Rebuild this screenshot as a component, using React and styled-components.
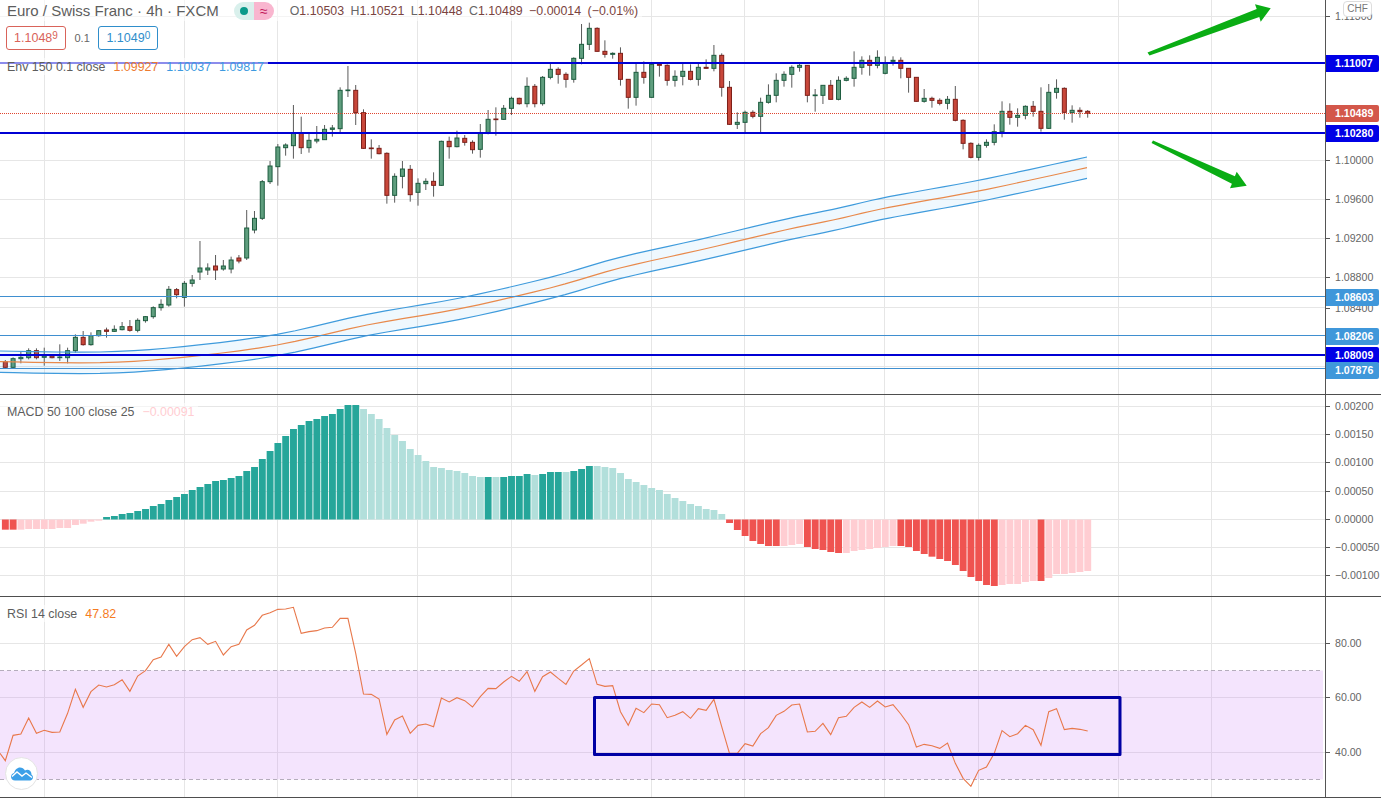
import React from 'react';
import styled, { createGlobalStyle } from 'styled-components';

const GlobalStyle = createGlobalStyle`
  html, body { margin: 0; padding: 0; background: #fff; }
  body { font-family: "Liberation Sans", Arial, sans-serif; overflow: hidden; }
`;

const PLOT_W = 1325;
const barX = (i) => 5.3 + i * 7.787;
const GRID_X = [44.5, 184.5, 277.5, 417.5, 511.5, 651.5, 744.5, 884.5, 978.5, 1118.5, 1211.5];

// candles: [bodyTop, bodyBottom, wickTop, wickBottom, colour], in thirds of a pixel
const CANDLES = `
1085 1102 1080 1105 r|1076 1102 1072 1105 g|1072 1076 1055 1090 g|1052 1073 1045 1078 g|1052 1073 1045 1078 r
1068 1072 1043 1097 g|1068 1073 1062 1075 r|1071 1073 1033 1083 g|1052 1073 1043 1090 g|1012 1052 1003 1058 g
1012 1034 993 1037 r|1007 1034 997 1037 g|992 1007 990 1010 g|990 994 983 1013 r|988 994 976 996 g
980 989 966 991 g|980 991 960 995 r|961 991 955 997 g|950 962 948 968 g|923 950 919 956 g
913 923 898 932 g|868 915 858 920 g|869 884 864 895 r|850 892 843 920 g|840 850 825 860 g
804 816 723 840 g|804 810 790 825 g|798 810 765 840 r|798 807 780 812 g|780 807 770 820 g
774 783 765 790 r|684 774 630 780 g|655 690 633 700 g|545 655 540 660 g|498 545 483 552 g
441 500 432 557 g|435 443 430 467 g|400 437 315 476 g|400 443 350 462 r|421 443 400 458 g
418 423 378 430 g|388 419 375 420 g|384 388 375 410 g|271 386 262 398 g|270 272 198 291 g
271 338 255 375 r|338 445 328 447 r|444 446 418 476 r|445 461 435 463 r|460 586 457 611 r
529 586 520 608 g|507 529 483 565 g|508 584 495 605 r|550 577 535 617 g|544 551 535 570 g
544 556 517 590 r|424 556 422 558 g|424 440 410 476 r|414 440 392 442 g
415 427 405 437 r|427 449 421 461 r|400 448 372 473 g|358 400 330 403 g|357 359 322 407 r
325 358 315 360 g|295 325 290 345 g|295 311 293 314 r|259 311 232 322 g|259 311 252 322 r
232 311 228 317 g|208 232 190 238 g|208 223 202 251 r|223 238 217 263 r|175 238 172 248 g
133 175 72 193 g|85 133 68 150 g|85 154 82 155 r|154 163 121 173 r|160 163 157 176 g
160 238 142 257 r|238 292 238 326 r|217 292 190 317 g|217 232 184 251 r|193 292 187 293 g
193 196 190 230 r|196 241 193 257 r|229 241 211 260 g|214 229 190 256 g|214 238 193 241 r
202 238 190 257 g|202 205 178 206 r|166 205 135 214 g|166 262 160 290 r|262 373 243 375 r
367 373 337 387 g|337 367 332 397 g|337 349 331 355 r|307 349 293 397 g|286 307 253 311 g
241 286 220 307 g|223 241 214 260 g|202 223 196 263 g|196 202 190 215 g|196 286 195 307 r
285 287 267 335 g|256 286 256 312 g|256 298 240 298 r|241 298 229 301 g|235 241 229 244 g
202 235 154 260 g|181 202 169 224 g|181 196 166 227 r|172 196 151 205 g|190 220 169 223 g
181 184 169 197 g|181 205 172 235 r|205 232 205 278 r|232 304 232 305 r
295 304 267 308 g|295 301 290 323 r|301 310 295 316 r|298 310 288 328 g|298 361 258 364 r
361 430 358 448 r|430 472 427 475 r|436 472 430 482 g|427 436 418 443 g|395 427 373 436 g
334 395 304 412 g|334 352 310 374 r|346 352 325 380 g|319 346 316 358 g|319 334 303 350 r
334 385 262 395 r|277 385 252 387 g|265 277 238 296 g|265 337 262 359 r|331 338 316 368 g
331 335 322 353 r|334 340 330 353 r`
  .trim()
  .split(/[|\n]/)
  .map((row) => {
    const [a, b, c, d, col] = row.trim().split(' ');
    return { top: a / 3, bottom: b / 3, high: c / 3, low: d / 3, col };
  });

const teal = '#26a69a';
const paleTeal = '#b2dfdb';
const red = '#ef5350';
const pink = '#ffcdd2';
// bar ends are in thirds of a pixel too, base is where that run of numbers was measured from
const hist = (colour, ends, base) => ends.map((v) => ({ colour, end: (v + base) / 3 }));
const MACD = [
  ...hist(red, [749, 749], 840),
  ...hist(pink, [749, 747, 747, 747, 747, 744, 744, 735, 731, 725, 722], 840),
  ...hist(teal, [711, 708, 702, 699, 693, 687, 678, 672, 660, 651, 642, 630, 621, 612, 603, 600, 594, 588, 573, 561, 537, 513, 489, 468, 447, 435, 423, 417, 408, 402, 387, 375, 375], 840),
  ...hist(paleTeal, [387, 402, 417, 444, 465, 483, 507, 525, 543, 561, 564, 570, 573], 840),
  ...hist(paleTeal, [219, 228, 231], 1200),
  ...hist(teal, [231], 1200),
  ...hist(paleTeal, [231], 1200),
  ...hist(teal, [231, 228, 228, 222], 1200),
  ...hist(paleTeal, [225], 1200),
  ...hist(teal, [222, 216, 216], 1200),
  ...hist(paleTeal, [216], 1200),
  ...hist(teal, [213, 207, 198], 1200),
  ...hist(paleTeal, [198, 201, 204, 219, 237, 246, 255, 264, 270, 282, 294, 303, 312, 318, 327, 330, 342], 1200),
  ...hist(red, [369, 390, 408, 423, 432, 438, 438], 1200),
  ...hist(pink, [438, 435, 432], 1200),
  ...hist(red, [441, 447, 450, 456, 459], 1200),
  ...hist(pink, [459, 453, 450, 447, 444, 441, 438], 1200),
  ...hist(red, [438, 441, 453, 462, 470, 477, 483, 495, 513, 531, 543, 555, 558], 1200),
  ...hist(pink, [555, 552, 552, 546, 543], 1200),
  ...hist(red, [543], 1200),
  ...hist(pink, [534, 522, 522, 519, 516, 513], 1200),
];

const RSI = [
  512, 436, 432, 384, 430, 421, 427, 426, 370, 298, 352, 305, 285, 291, 284, 269, 304, 258, 242, 209,
  201, 163, 199, 170, 149, 143, 163, 154, 195, 170, 163, 120, 106, 76, 68, 58, 57, 52, 130, 125,
  122, 114, 112, 85, 85, 190, 312, 313, 327, 433, 390, 378, 430, 406, 402, 410, 324, 336, 323, 332,
  351, 320, 295, 296, 276, 259, 274, 245, 304, 260, 246, 265, 283, 243, 225, 206, 283, 289, 287, 365,
  406, 355, 368, 342, 344, 383, 376, 365, 385, 356, 361, 328, 410, 490, 490, 461, 468, 431, 413, 376,
  364, 345, 342, 426, 424, 400, 434, 383, 379, 352, 336, 352, 333, 351, 344, 372, 404, 471, 463, 467,
  475, 459, 520, 565, 589, 541, 531, 490, 422, 440, 431, 406, 419, 466, 365, 356, 419, 415, 418, 423,
];

const ENV_MID = [
  [0, 361.7], [100, 362.7], [183, 357.3], [277, 345], [367, 325], [460, 308.7], [550, 288], [620, 268],
  [700, 250], [785, 230], [833, 220], [881, 209], [920, 201.7], [987, 189.3], [1087, 167.7],
];

// Catmull-Rom through the measured points, the real envelope has no corners
const smoothEnv = ENV_MID.flatMap((p, i) => {
  if (i === ENV_MID.length - 1) return [p];
  const a = ENV_MID[Math.max(i - 1, 0)];
  const c = ENV_MID[i + 1];
  const d = ENV_MID[Math.min(i + 2, ENV_MID.length - 1)];
  return [0, 0.2, 0.4, 0.6, 0.8].map((t) => [0, 1].map((k) => (
    0.5 * (2 * p[k] + (c[k] - a[k]) * t + (2 * a[k] - 5 * p[k] + 4 * c[k] - d[k]) * t * t
      + (3 * p[k] - a[k] - 3 * c[k] + d[k]) * t * t * t)
  )));
});
const shifted = (dy) => smoothEnv.map(([x, y]) => `${x},${y + dy}`);

const Chart = styled.div`
  width: 1381px;
  height: 798px;
  display: flex;
  flex-direction: column;
  font-size: 12.4px;
  color: #5d5d5d;
`;

const Pane = styled.section`
  height: ${(p) => p.$height}px;
  box-sizing: border-box;
  flex: none;
  display: grid;
  grid-template-columns: ${PLOT_W}px 56px;
  border-bottom: 1px solid #4e4e4e;
`;

const Plot = styled.div`
  position: relative;
  overflow: hidden;
`;

const PlotSvg = styled.svg`
  display: block;
`;

const Scale = styled.div`
  position: relative;
  border-left: 1px solid #555;
  background: #fff;
  overflow: hidden;
  font-size: 10.6px;
`;

const Tick = styled.div`
  position: absolute;
  left: 0;
  height: 16px;
  padding-left: 9px;
  line-height: 16px;
  color: #666;
  white-space: nowrap;

  &::before {
    content: '';
    position: absolute;
    left: 0;
    top: 8px;
    width: 4px;
    height: 1px;
    background: #555;
  }
`;

const PriceTag = styled.div`
  position: absolute;
  left: 0;
  width: 53px;
  height: 17px;
  padding-left: 9px;
  box-sizing: border-box;
  line-height: 17px;
  font-weight: 700;
  color: #fff;
  background: ${(p) => p.$bg};
  border-radius: 0 2px 2px 0;
`;

const CurrencyButton = styled.div`
  position: absolute;
  top: 1px;
  left: 17px;
  width: 27px;
  height: 14px;
  line-height: 14px;
  text-align: center;
  background: #fff;
  border: 1px solid #ddd;
  border-radius: 4px;
  color: #777;
  font-size: 10px;
`;

const Legend = styled.div`
  position: absolute;
  left: 0;
  top: ${(p) => p.$top}px;
  display: flex;
  flex-direction: column;
  align-items: flex-start;
`;

const LegendRow = styled.div`
  display: flex;
  align-items: center;
  height: ${(p) => p.$height || 17}px;
  padding: 0 4px 0 7px;
  gap: 8px;
  white-space: nowrap;
  background: rgba(255, 255, 255, 0.55);
`;

const Title = styled.span`
  font-size: 15px;
`;

const StatusPill = styled.div`
  display: flex;
  width: 40px;
  height: 18px;
  margin: 0 8px 0 7px;
  border-radius: 9px;
  overflow: hidden;
`;

const StatusHalf = styled.span`
  flex: 1;
  display: flex;
  align-items: center;
  justify-content: center;
  background: ${(p) => p.$bg};
  color: #c2185b;
  font-size: 14px;
`;

const MarketDot = styled.i`
  width: 8px;
  height: 8px;
  border-radius: 50%;
  background: #0a9a8a;
`;

const Ohlc = styled.span`
  color: #7a4340;
  word-spacing: 3px;
`;

const Key = styled.span`
  color: #666;
`;

const Value = styled.span`
  color: ${(p) => p.$color};
`;

const QuoteRow = styled.div`
  display: flex;
  align-items: center;
  margin: 5px 0 8px 6px;
  gap: 8.5px;
`;

const QuoteBox = styled.div`
  width: 60px;
  height: 24px;
  box-sizing: border-box;
  border: 1px solid ${(p) => p.$color};
  border-radius: 3px;
  color: ${(p) => p.$color};
  background: #fff;
  font-size: 12.5px;
  display: flex;
  align-items: center;
  justify-content: center;

  sup {
    font-size: 10px;
    line-height: 1;
    margin-top: -5px;
  }
`;

const Spread = styled.span`
  color: #666;
  font-size: 11px;
`;

const LogoBadge = styled.div`
  position: absolute;
  left: 5px;
  bottom: 7px;
  width: 33px;
  height: 33px;
  box-sizing: border-box;
  border: 1px solid #e4e4e4;
  border-radius: 50%;
  background: #fff;
  display: flex;
  align-items: center;
  justify-content: center;
`;

const Grid = ({ ys }) => (
  <g stroke="#e6e6e6" strokeWidth="1" shapeRendering="crispEdges">
    {ys.map((y) => <line key={y} x1="0" x2={PLOT_W} y1={y} y2={y} />)}
    {GRID_X.map((x) => <line key={x} x1={x} x2={x} y1="0" y2="798" />)}
  </g>
);

const Candle = ({ c, i }) => {
  const x = barX(i);
  const green = c.col === 'g';
  return (
    <g>
      <line x1={x} x2={x} y1={c.high} y2={c.low} stroke="#5a5a5a" />
      <rect
        x={x - 2}
        y={c.top}
        width="4"
        height={c.bottom - c.top}
        fill={green ? '#5f9e7e' : '#c8473a'}
        stroke={green ? '#1d5c3f' : '#7d1f18'}
      />
    </g>
  );
};

const HLine = ({ y, color, width }) => (
  <line x1="0" x2={PLOT_W} y1={y} y2={y} stroke={color} strokeWidth={width} shapeRendering="crispEdges" />
);

const MainPlot = () => (
  <PlotSvg width={PLOT_W} height="394" viewBox={`0 0 ${PLOT_W} 394`}>
    <Grid ys={[16.5, 160.5, 199.5, 238.5, 277.5, 307.5, 366.5]} />
    {CANDLES.map((c, i) => <Candle key={i} c={c} i={i} />)}
    <polygon
      points={[...shifted(-10.7), ...shifted(10.7).reverse()].join(' ')}
      fill="rgba(33,150,243,0.07)"
    />
    <polyline points={shifted(-10.7).join(' ')} fill="none" stroke="#3f9bdc" strokeWidth="1.2" />
    <polyline points={shifted(10.7).join(' ')} fill="none" stroke="#3f9bdc" strokeWidth="1.2" />
    <polyline points={shifted(0).join(' ')} fill="none" stroke="#e8894b" strokeWidth="1.2" />
    <line x1="0" x2={PLOT_W} y1="113.5" y2="113.5" stroke="#e0452f" strokeDasharray="1 1" shapeRendering="crispEdges" />
    <HLine y="296.5" color="#3f8fd0" width="1" />
    <HLine y="335.5" color="#3f8fd0" width="1" />
    <HLine y="368.5" color="#3f8fd0" width="1" />
    <HLine y="63" color="#0000d4" width="2" />
    <HLine y="133" color="#0000d4" width="2" />
    <HLine y="355" color="#0000d4" width="2" />
    <g fill="#0aad14">
      <polygon points="1147.5,52.5 1256.7,9 1255,4.3 1270.7,8.3 1260.7,21.7 1259.3,17 1149.5,55.5" />
      <polygon points="1153,140.5 1234.9,176.3 1236.7,171.7 1246.7,185.7 1230,188.3 1231.9,183.7 1151.5,143" />
    </g>
  </PlotSvg>
);

const MacdPlot = () => (
  <PlotSvg width={PLOT_W} height="201" viewBox={`0 395 ${PLOT_W} 201`}>
    <Grid ys={[406.5, 434.5, 462.5, 491.5, 519.5, 547.5, 575.5]} />
    {MACD.map((b, i) => (
      <rect
        key={i}
        x={barX(i) - 3.4}
        width="6.9"
        y={Math.min(b.end, 519.5)}
        height={Math.abs(b.end - 519.5)}
        fill={b.colour}
      />
    ))}
  </PlotSvg>
);

const RsiPlot = () => (
  <PlotSvg width={PLOT_W} height="200" viewBox={`0 597 ${PLOT_W} 200`}>
    <Grid ys={[643.5, 697.5, 752.5]} />
    <rect x="0" y="670.5" width="1323" height="109" fill="rgba(200,120,245,0.2)" />
    <g stroke="#b5adbc" strokeDasharray="4 3" shapeRendering="crispEdges">
      <line x1="0" x2="1323" y1="670.5" y2="670.5" />
      <line x1="0" x2="1323" y1="779.5" y2="779.5" />
    </g>
    <polyline
      points={`0,${590 + 490 / 3} ${RSI.map((v, i) => `${barX(i)},${590 + v / 3}`).join(' ')}`}
      fill="none"
      stroke="#e8784b"
      strokeWidth="1.1"
    />
    <rect x="594.5" y="697.5" width="525.5" height="57" fill="none" stroke="#0000a4" strokeWidth="3" strokeLinejoin="round" />
  </PlotSvg>
);

const CloudLogo = () => (
  <svg width="22" height="14" viewBox="0 0 22 14">
    <path
      fill="#3ca0e8"
      d="M4 13.5C1.8 13.5 0 11.8 0 9.7 0 7.9 1.3 6.4 3.1 6 4 3 6.2.6 9 .6c2.2 0 3.8 1.1 5 2.8.7-.4 1.5-.6 2.3-.6 2.3 0 4.2 2 4.2 4.4v.6c.9.5 1.5 1.4 1.5 2.5 0 1.8-1.4 3.2-3 3.2z"
    />
    <polyline points="1,9.5 6,5 11,9 15,6 21,10.5" fill="none" stroke="#fff" strokeWidth="1.4" />
  </svg>
);

const mainTicks = [
  ['1.11300', 16], ['1.10000', 160], ['1.09600', 199], ['1.09200', 238], ['1.08800', 277], ['1.08400', 308],
];
const mainTags = [
  ['1.11007', 63, '#0000e6'], ['1.10489', 113, '#d3574a'], ['1.10280', 133.5, '#0000e6'],
  ['1.08603', 297, '#3f97da'], ['1.08206', 336, '#3f97da'], ['1.08009', 355, '#0000e6'], ['1.07876', 370.5, '#3f97da'],
];
const macdTicks = [
  ['0.00200', 406], ['0.00150', 434], ['0.00100', 462], ['0.00050', 491], ['0.00000', 519], ['−0.00050', 547], ['−0.00100', 575],
];
const rsiTicks = [['80.00', 643], ['60.00', 697], ['40.00', 752]];

const ScaleColumn = ({ top, ticks, tags = [], children }) => (
  <Scale>
    {ticks.map(([label, y]) => <Tick key={label} style={{ top: y - top - 8 }}>{label}</Tick>)}
    {tags.map(([label, y, bg]) => <PriceTag key={label} $bg={bg} style={{ top: y - top - 8.5 }}>{label}</PriceTag>)}
    {children}
  </Scale>
);

export default function App() {
  return (
    <Chart>
      <GlobalStyle />
      <Pane $height={395}>
        <Plot>
          <MainPlot />
          <Legend $top={0}>
            <LegendRow $height={21}>
              <Title>Euro / Swiss Franc · 4h · FXCM</Title>
              <StatusPill>
                <StatusHalf $bg="#d9f0ec"><MarketDot /></StatusHalf>
                <StatusHalf $bg="#f9b6cf">≈</StatusHalf>
              </StatusPill>
              <Ohlc>
                <Key>O</Key>1.10503 <Key>H</Key>1.10521 <Key>L</Key>1.10448 <Key>C</Key>1.10489 −0.00014 (−0.01%)
              </Ohlc>
            </LegendRow>
            <QuoteRow>
              <QuoteBox $color="#d9635a">1.1048<sup>9</sup></QuoteBox>
              <Spread>0.1</Spread>
              <QuoteBox $color="#2f8ecb">1.1049<sup>0</sup></QuoteBox>
            </QuoteRow>
            <LegendRow>
              <span>Env 150 0.1 close</span>
              <Value $color="#ed7b30">1.09927</Value>
              <Value $color="#3d9ae0">1.10037</Value>
              <Value $color="#3d9ae0">1.09817</Value>
            </LegendRow>
          </Legend>
        </Plot>
        <ScaleColumn top={0} ticks={mainTicks} tags={mainTags}>
          <CurrencyButton>CHF</CurrencyButton>
        </ScaleColumn>
      </Pane>
      <Pane $height={202}>
        <Plot>
          <MacdPlot />
          <Legend $top={8}>
            <LegendRow>
              <span>MACD 50 100 close 25</span>
              <Value $color={pink}>−0.00091</Value>
            </LegendRow>
          </Legend>
        </Plot>
        <ScaleColumn top={395} ticks={macdTicks} />
      </Pane>
      <Pane $height={201}>
        <Plot>
          <RsiPlot />
          <Legend $top={8}>
            <LegendRow>
              <span>RSI 14 close</span>
              <Value $color="#f57c1f">47.82</Value>
            </LegendRow>
          </Legend>
          <LogoBadge><CloudLogo /></LogoBadge>
        </Plot>
        <ScaleColumn top={597} ticks={rsiTicks} />
      </Pane>
    </Chart>
  );
}
